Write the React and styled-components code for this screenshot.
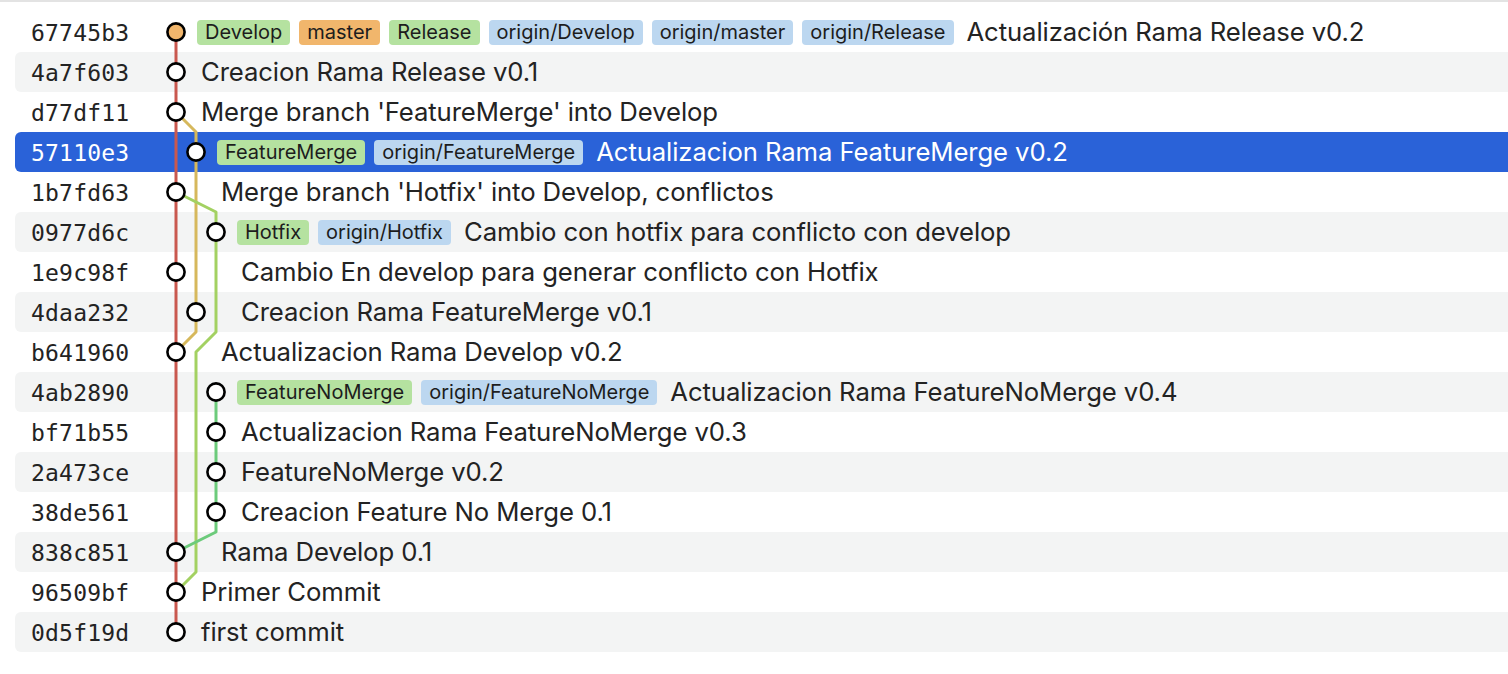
import React from 'react';
import styled, {createGlobalStyle} from 'styled-components';

const GlobalStyle = createGlobalStyle`
  html, body {
    margin: 0;
    padding: 0;
    background: #fff;
  }
  body {
    font-family: Inter, "Noto Sans", "Liberation Sans", sans-serif;
    color: #232323;
  }
`;

const ROW_H = 40;
const LANE_X = [176, 196, 216];

const colors = {
  red: '#c9584f',
  yellow: '#d6b85c',
  lime: '#a3d162',
  green: '#6ccb7b',
};

const tagColors = {
  green: '#b5e2a0',
  orange: '#f1b66c',
  blue: '#bcd7f0',
};

const commits = [
  {hash: '67745b3', lane: 0, lanes: 1, head: true, msg: 'Actualización Rama Release v0.2',
    tags: [['Develop', 'green'], ['master', 'orange'], ['Release', 'green'], ['origin/Develop', 'blue'], ['origin/master', 'blue'], ['origin/Release', 'blue']]},
  {hash: '4a7f603', lane: 0, lanes: 1, msg: 'Creacion Rama Release v0.1'},
  {hash: 'd77df11', lane: 0, lanes: 1, msg: "Merge branch 'FeatureMerge' into Develop"},
  {hash: '57110e3', lane: 1, lanes: 2, selected: true, msg: 'Actualizacion Rama FeatureMerge v0.2',
    tags: [['FeatureMerge', 'green'], ['origin/FeatureMerge', 'blue']]},
  {hash: '1b7fd63', lane: 0, lanes: 2, msg: "Merge branch 'Hotfix' into Develop, conflictos"},
  {hash: '0977d6c', lane: 2, lanes: 3, msg: 'Cambio con hotfix para conflicto con develop',
    tags: [['Hotfix', 'green'], ['origin/Hotfix', 'blue']]},
  {hash: '1e9c98f', lane: 0, lanes: 3, msg: 'Cambio En develop para generar conflicto con Hotfix'},
  {hash: '4daa232', lane: 1, lanes: 3, msg: 'Creacion Rama FeatureMerge v0.1'},
  {hash: 'b641960', lane: 0, lanes: 2, msg: 'Actualizacion Rama Develop v0.2'},
  {hash: '4ab2890', lane: 2, lanes: 3, msg: 'Actualizacion Rama FeatureNoMerge v0.4',
    tags: [['FeatureNoMerge', 'green'], ['origin/FeatureNoMerge', 'blue']]},
  {hash: 'bf71b55', lane: 2, lanes: 3, msg: 'Actualizacion Rama FeatureNoMerge v0.3'},
  {hash: '2a473ce', lane: 2, lanes: 3, msg: 'FeatureNoMerge v0.2'},
  {hash: '38de561', lane: 2, lanes: 3, msg: 'Creacion Feature No Merge 0.1'},
  {hash: '838c851', lane: 0, lanes: 2, msg: 'Rama Develop 0.1'},
  {hash: '96509bf', lane: 0, lanes: 1, msg: 'Primer Commit'},
  {hash: '0d5f19d', lane: 0, lanes: 1, msg: 'first commit'},
];

// y of row center / row top, relative to the list
const cy = (i) => i * ROW_H + ROW_H / 2;
const top = (i) => i * ROW_H;

const branchLines = [
  {color: colors.red, pts: [[LANE_X[0], cy(0)], [LANE_X[0], cy(15)]]},
  {color: colors.yellow, pts: [[LANE_X[0], cy(2)], [LANE_X[1], top(3)], [LANE_X[1], top(8)], [LANE_X[0], cy(8)]]},
  {color: colors.lime, pts: [[LANE_X[0], cy(4)], [LANE_X[2], top(5)], [LANE_X[2], top(8)], [LANE_X[1], cy(8)], [LANE_X[1], top(14)], [LANE_X[0], cy(14)]]},
  {color: colors.green, pts: [[LANE_X[2], cy(9)], [LANE_X[2], top(13)], [LANE_X[0], cy(13)]]},
];

const Page = styled.div`
  border-top: 2px solid #e3e3e3;
  padding-top: 10px;
  overflow: hidden;
`;

const List = styled.div`
  position: relative;
  margin-left: 15px;
`;

const Row = styled.div`
  display: flex;
  align-items: center;
  height: ${ROW_H}px;
  padding-left: 16px;
  border-radius: 6px 0 0 6px;
  background: ${(p) => (p.$selected ? '#2a62d8' : p.$alt ? '#f3f4f4' : 'transparent')};
  color: ${(p) => (p.$selected ? '#fff' : '#232323')};
  white-space: nowrap;
`;

const Hash = styled.span`
  width: 130px;
  flex-shrink: 0;
  font-family: "DejaVu Sans Mono", "Liberation Mono", monospace;
  font-size: 23px;
  letter-spacing: 0.2px;
  padding-top: 1px;
`;

const Content = styled.div`
  display: flex;
  align-items: center;
  gap: 9px;
  margin-left: ${(p) => 16 + p.$lanes * 20}px;
`;

const Tag = styled.span`
  display: inline-flex;
  align-items: center;
  height: 25px;
  padding: 0 8px;
  border-radius: 4px;
  background: ${(p) => tagColors[p.$kind]};
  color: #1d1d1d;
  font-size: 20px;
`;

const Message = styled.span`
  font-size: 25.7px;
  padding-left: 4px;
  letter-spacing: -0.1px;
  margin-top: -1px;
`;

const Graph = styled.svg`
  position: absolute;
  left: -15px;
  top: 0;
  pointer-events: none;
`;

function CommitGraph() {
  const h = commits.length * ROW_H;
  return (
    <Graph width="260" height={h} viewBox={`0 0 260 ${h}`}>
      {branchLines.map((l, i) => (
        <polyline key={i} points={l.pts.map((p) => p.join(',')).join(' ')}
          fill="none" stroke={l.color} strokeWidth="3" strokeLinejoin="round" />
      ))}
      {commits.map((c, i) => (
        <circle key={c.hash} cx={LANE_X[c.lane]} cy={cy(i)} r="8.6"
          fill={c.head ? '#f1b66c' : '#fff'} stroke="#000" strokeWidth="2.6" />
      ))}
    </Graph>
  );
}

export default function App() {
  return (
    <Page>
      <GlobalStyle />
      <List>
        {commits.map((c, i) => (
          <Row key={c.hash} $alt={i % 2 === 1} $selected={c.selected}>
            <Hash>{c.hash}</Hash>
            <Content $lanes={c.lanes}>
              {c.tags && c.tags.map(([name, kind]) => (
                <Tag key={name} $kind={kind}>{name}</Tag>
              ))}
              <Message>{c.msg}</Message>
            </Content>
          </Row>
        ))}
        <CommitGraph />
      </List>
    </Page>
  );
}
